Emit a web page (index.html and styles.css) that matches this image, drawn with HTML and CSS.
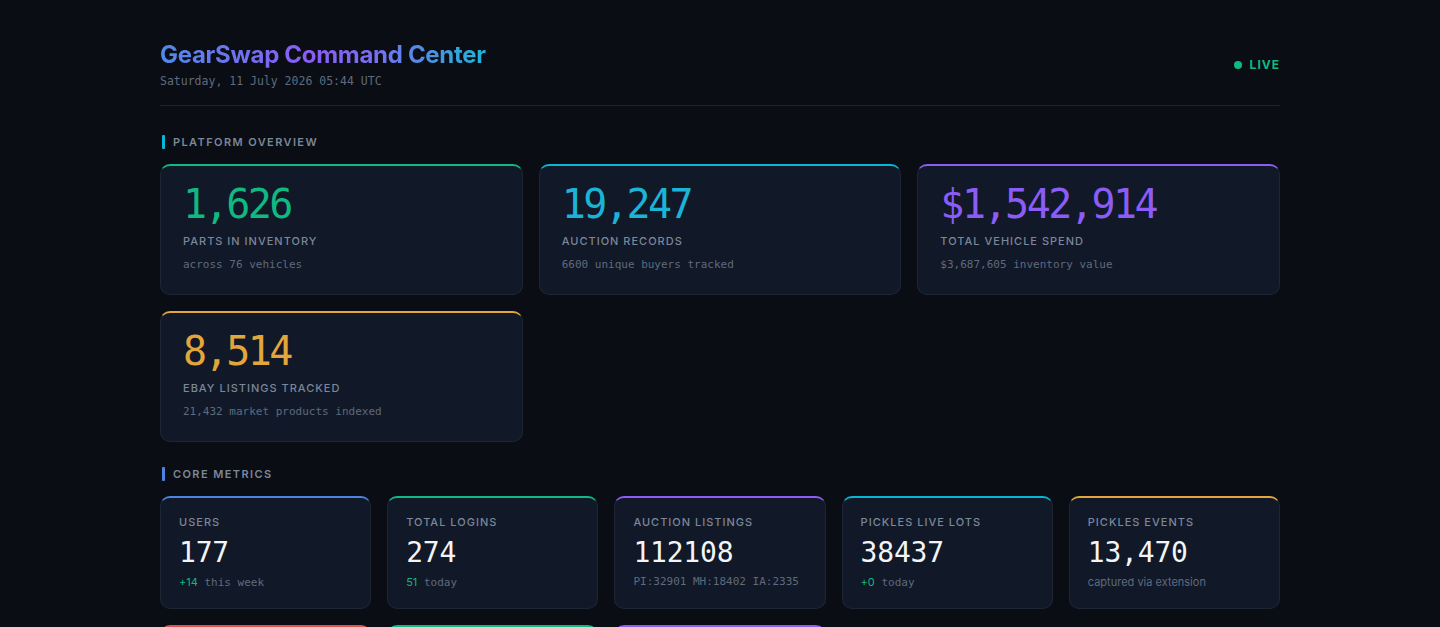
FILE: index.html
```html
<!DOCTYPE html>
<html lang="en">
<head>
    <meta charset="UTF-8">
    <meta name="viewport" content="width=device-width, initial-scale=1.0">
    <title>GearSwap Command Center</title>
    <link rel="stylesheet" href="styles.css">
</head>
<body>
<div class="page">
    <header class="top">
        <div>
            <h1 class="brand">GearSwap Command Center</h1>
            <div class="date">Saturday, 11 July 2026 05:44 UTC</div>
        </div>
        <div class="live"><span class="dot"></span>LIVE</div>
    </header>

    <h2 class="section-title"><span class="bar cyan"></span>Platform Overview</h2>
    <div class="overview">
        <div class="card big green">
            <div class="value">1,626</div>
            <div class="label">Parts in Inventory</div>
            <div class="sub">across 76 vehicles</div>
        </div>
        <div class="card big cyan">
            <div class="value">19,247</div>
            <div class="label">Auction Records</div>
            <div class="sub">6600 unique buyers tracked</div>
        </div>
        <div class="card big purple">
            <div class="value">$1,542,914</div>
            <div class="label">Total Vehicle Spend</div>
            <div class="sub">$3,687,605 inventory value</div>
        </div>
        <div class="card big amber">
            <div class="value">8,514</div>
            <div class="label">eBay Listings Tracked</div>
            <div class="sub">21,432 market products indexed</div>
        </div>
    </div>

    <h2 class="section-title second"><span class="bar blue"></span>Core Metrics</h2>
    <div class="metrics">
        <div class="card small blue">
            <div class="label">Users</div>
            <div class="value">177</div>
            <div class="sub"><span class="up">+14</span> this week</div>
        </div>
        <div class="card small green">
            <div class="label">Total Logins</div>
            <div class="value">274</div>
            <div class="sub"><span class="up">51</span> today</div>
        </div>
        <div class="card small purple">
            <div class="label">Auction Listings</div>
            <div class="value">112108</div>
            <div class="sub">PI:32901 MH:18402 IA:2335</div>
        </div>
        <div class="card small cyan">
            <div class="label">Pickles Live Lots</div>
            <div class="value">38437</div>
            <div class="sub"><span class="up">+0</span> today</div>
        </div>
        <div class="card small amber">
            <div class="label">Pickles Events</div>
            <div class="value">13,470</div>
            <div class="sub plain">captured via extension</div>
        </div>
        <div class="card small red">
            <div class="label">Failed Jobs</div>
            <div class="value">3</div>
            <div class="sub">last 24h</div>
        </div>
        <div class="card small green">
            <div class="label">Active Sessions</div>
            <div class="value">12</div>
            <div class="sub">right now</div>
        </div>
        <div class="card small purple">
            <div class="label">Price Alerts</div>
            <div class="value">48</div>
            <div class="sub">this week</div>
        </div>
    </div>
</div>
</body>
</html>
```

FILE: styles.css
```css
body {
    margin: 0;
    background-color: #0a0d14;
    color: #e5e7eb;
    font-family: Inter, "Noto Sans", sans-serif;
}
.page {
    max-width: 1120px;
    margin: 0 auto;
    padding: 40px 0;
}
.top {
    display: flex;
    justify-content: space-between;
    align-items: center;
    padding-bottom: 16px;
    border-bottom: 1px solid #1c2230;
}
.brand {
    margin: 0;
    font-size: 24px;
    line-height: 30px;
    font-weight: 700;
    letter-spacing: -0.3px;
    background: linear-gradient(90deg, #4f8ae8 0%, #8b5cf6 45%, #7a6df2 65%, #1fb5d6 100%);
    -webkit-background-clip: text;
    background-clip: text;
    color: transparent;
    display: inline-block;
}
.date {
    margin-top: 3px;
    font-family: "DejaVu Sans Mono", "Liberation Mono", monospace;
    font-size: 11.5px;
    line-height: 16px;
    color: #5f6b7d;
}
.live {
    display: flex;
    align-items: center;
    gap: 8px;
    font-size: 12px;
    font-weight: 700;
    letter-spacing: 1px;
    color: #10b981;
}
.dot {
    width: 8px;
    height: 8px;
    border-radius: 50%;
    background: #10b981;
}
.section-title {
    display: flex;
    align-items: center;
    gap: 8px;
    margin: 29px 0 15px;
    font-size: 11px;
    line-height: 14px;
    font-weight: 600;
    letter-spacing: 1.4px;
    text-transform: uppercase;
    color: #7c8799;
}
.section-title.second {
    margin-top: 25px;
}
.bar {
    width: 3px;
    height: 14px;
    margin-left: 2px;
    border-radius: 1px;
}
.bar.cyan { background: #06b6d4; }
.bar.blue { background: #4a84e0; }

.overview {
    display: grid;
    grid-template-columns: repeat(3, minmax(0, 1fr));
    gap: 16px;
}
.metrics {
    display: grid;
    grid-template-columns: repeat(5, minmax(0, 1fr));
    gap: 16px;
}
.card {
    background: #111827;
    border: 1px solid #1e2634;
    border-top: 2px solid;
    border-radius: 10px;
}
.card.green { border-top-color: #10b981; }
.card.cyan { border-top-color: #06b6d4; }
.card.purple { border-top-color: #8b5cf6; }
.card.amber { border-top-color: #e3a63c; }
.card.blue { border-top-color: #4a84e0; }
.card.red { border-top-color: #e05252; }

.card.big {
    padding: 18px 22px 22px;
}
.card.big .value {
    font-family: "DejaVu Sans Mono", "Liberation Mono", monospace;
    font-size: 40px;
    line-height: 40px;
    letter-spacing: -2.5px;
}
.card.big.green .value { color: #10b981; }
.card.big.cyan .value { color: #1bb4d6; }
.card.big.purple .value { color: #8b5cf6; }
.card.big.amber .value { color: #e3a63c; }
.card.big .label {
    margin-top: 10px;
}
.card.big .sub {
    margin-top: 10px;
}
.label {
    font-size: 11px;
    line-height: 14px;
    font-weight: 500;
    letter-spacing: 1px;
    text-transform: uppercase;
    color: #7c8799;
}
.sub {
    font-family: "DejaVu Sans Mono", "Liberation Mono", monospace;
    font-size: 11px;
    line-height: 14px;
    color: #5f6b7d;
}
.sub.plain {
    font-family: Inter, "Noto Sans", sans-serif;
}
.up {
    font-family: Inter, "Noto Sans", sans-serif;
    color: #10b981;
}
.card.small {
    padding: 17px 18px 18px;
}
.card.small .value {
    margin-top: 8px;
    font-family: "DejaVu Sans Mono", "Liberation Mono", monospace;
    font-size: 28px;
    line-height: 32px;
    letter-spacing: -0.2px;
    color: #f3f4f6;
}
.card.small .sub {
    margin-top: 6px;
}
```
